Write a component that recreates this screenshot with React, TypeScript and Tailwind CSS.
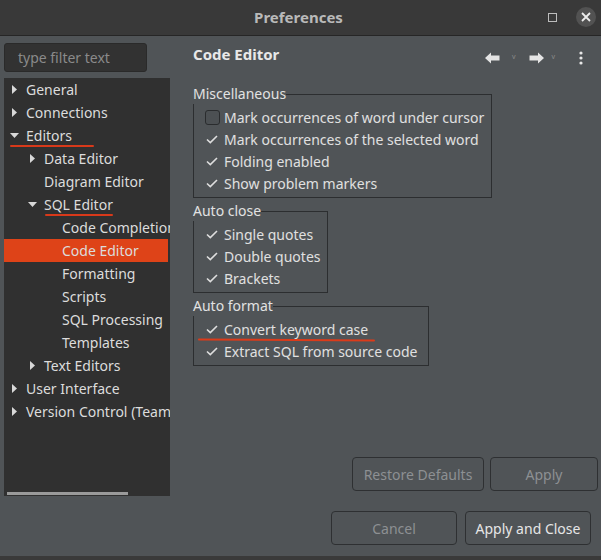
import React from "react";

type Item = { label: string; level: number; arrow?: "right" | "down"; selected?: boolean; ul?: { left: number; width: number } };

const items: Item[] = [
  { label: "General", level: 0, arrow: "right" },
  { label: "Connections", level: 0, arrow: "right" },
  { label: "Editors", level: 0, arrow: "down", ul: { left: 6, width: 84 } },
  { label: "Data Editor", level: 1, arrow: "right" },
  { label: "Diagram Editor", level: 1 },
  { label: "SQL Editor", level: 1, arrow: "down", ul: { left: 41, width: 68 } },
  { label: "Code Completion", level: 2 },
  { label: "Code Editor", level: 2, selected: true },
  { label: "Formatting", level: 2 },
  { label: "Scripts", level: 2 },
  { label: "SQL Processing", level: 2 },
  { label: "Templates", level: 2 },
  { label: "Text Editors", level: 1, arrow: "right" },
  { label: "User Interface", level: 0, arrow: "right" },
  { label: "Version Control (Team)", level: 0, arrow: "right" },
];

const padFor = ["pl-[4px]", "pl-[22px]", "pl-[40px]"];

function Arrow({ dir }: { dir?: "right" | "down" }) {
  if (dir === "right")
    return (
      <div className="w-[18px] shrink-0 pl-[4px] flex items-center">
        <svg width="5" height="9" viewBox="0 0 5 9"><path d="M0 0 L5 4.5 L0 9 Z" fill="#d8d8d8" /></svg>
      </div>
    );
  if (dir === "down")
    return (
      <div className="w-[18px] shrink-0 pl-[2px] flex items-center">
        <svg width="9" height="5" viewBox="0 0 9 5"><path d="M0 0 L9 0 L4.5 5 Z" fill="#d8d8d8" /></svg>
      </div>
    );
  return <div className="w-[18px] shrink-0" />;
}

function Check() {
  return (
    <div className="w-[20px] h-[16px] shrink-0 flex items-center justify-center">
      <svg width="12" height="9" viewBox="0 0 12 9">
        <path d="M1 4.5 L4.3 7.6 L11 1" fill="none" stroke="#dedede" strokeWidth="1.6" />
      </svg>
    </div>
  );
}

function Box() {
  return (
    <div className="w-[20px] h-[16px] shrink-0 flex items-center justify-center">
      <div className="w-[15px] h-[15px] rounded-[3px] border border-[#2a2c2e] bg-[#4c5053]" />
    </div>
  );
}

function Row({ label, checked = true, ul }: { label: string; checked?: boolean; ul?: boolean }) {
  return (
    <div className="relative h-[22px] flex items-center pl-[8px] pr-[4px] gap-[2px] whitespace-nowrap">
      {checked ? <Check /> : <Box />}
      <span>{label}</span>
      {ul && <div className="absolute left-[4px] bottom-[-1px] w-[177px] h-[2px] bg-[#dc3b1a] rounded-full rotate-[0.4deg]" />}
    </div>
  );
}

function Group({ title, children, w }: { title: string; children: React.ReactNode; w: string }) {
  return (
    <fieldset className={`border border-[#2c2e30] ${w} min-w-0 px-0 pb-[3px]`}>
      <legend className="px-0 ml-[-1px] leading-[20px] text-[#e2e2e2]">{title}</legend>
      <div className="pt-[2px]">{children}</div>
    </fieldset>
  );
}

function Btn({ label, enabled, w }: { label: string; enabled?: boolean; w: string }) {
  return (
    <div
      className={`${w} h-[34px] rounded-[4px] border border-[#2e3032] flex items-center justify-center ${
        enabled ? "text-[#e6e6e6]" : "text-[#8d9093]"
      }`}
    >
      {label}
    </div>
  );
}

export default function App() {
  return (
    <div
      className="w-[601px] h-[560px] bg-[#505457] flex flex-col overflow-hidden text-[14px] text-[#e0e0e0]"
      style={{ fontFamily: "'Noto Sans', 'Open Sans', sans-serif" }}
    >
      {/* title bar */}
      <div className="h-[36px] shrink-0 bg-[#393939] border-b border-[#262626] flex items-center relative">
        <div className="flex-1 text-center font-bold text-[#b9b9b9] text-[15px] pr-[4px]">Preferences</div>
        <div className="absolute right-[44px] top-[13px] w-[9px] h-[9px] border border-[#bdbdbd]" />
        <div className="absolute right-[5px] top-[7px] w-[20px] h-[20px] rounded-full bg-[#525252] flex items-center justify-center">
          <svg width="10" height="10" viewBox="0 0 10 10">
            <path d="M1 1 L9 9 M9 1 L1 9" stroke="#ececec" strokeWidth="1.8" />
          </svg>
        </div>
      </div>

      {/* main */}
      <div className="flex h-[460px] shrink-0">
        {/* left */}
        <div className="w-[166px] shrink-0 ml-[4px] flex flex-col pt-[7px]">
          <div className="w-[143px] h-[29px] rounded-[3px] bg-[#323232] border border-[#2a2a2a] flex items-center pl-[13px] text-[#8a8a8a]">
            type filter text
          </div>
          <div className="mt-[6px] h-[418px] bg-[#303030] relative overflow-hidden">
            {items.map((it) => (
              <div
                key={it.label}
                className={`relative h-[23px] flex items-center whitespace-nowrap ${padFor[it.level]} ${
                  it.selected ? "bg-[#de4318] mr-[2px]" : ""
                }`}
              >
                <Arrow dir={it.arrow} />
                <span className="text-[#dcdcdc] shrink-0">{it.label}</span>
                {it.ul && (
                  <div
                    className="absolute bottom-[0px] h-[2px] bg-[#d8391a] rounded-full"
                    style={{ left: it.ul.left, width: it.ul.width }}
                  />
                )}
              </div>
            ))}
            <div className="absolute left-[3px] bottom-[1px] w-[121px] h-[3px] bg-[#9a9a9a]" />
          </div>
        </div>

        {/* right */}
        <div className="flex-1 ml-[23px] flex flex-col pt-[8px] pb-[5px]">
          <div className="flex items-center h-[20px] pr-[18px]">
            <div className="font-bold text-[15px] text-[#e8e8e8] flex-1">Code Editor</div>
            <svg width="15" height="12" viewBox="0 0 15 12" className="mt-[8px]">
              <path d="M0 6 L6 0.5 L6 3.5 L14.5 3.5 L14.5 8.5 L6 8.5 L6 11.5 Z" fill="#e4e4e4" />
            </svg>
            <span className="text-[7px] text-[#8a8a8a] ml-[12px] mt-[6px]">v</span>
            <svg width="15" height="12" viewBox="0 0 15 12" className="mt-[8px] ml-[14px]">
              <path d="M15 6 L9 0.5 L9 3.5 L0.5 3.5 L0.5 8.5 L9 8.5 L9 11.5 Z" fill="#e4e4e4" />
            </svg>
            <span className="text-[7px] text-[#8a8a8a] ml-[7px] mt-[6px]">v</span>
            <svg width="4" height="14" viewBox="0 0 4 14" className="ml-[24px] mt-[8px]">
              <circle cx="2" cy="2" r="1.6" fill="#e8e8e8" />
              <circle cx="2" cy="7" r="1.6" fill="#e8e8e8" />
              <circle cx="2" cy="12" r="1.6" fill="#e8e8e8" />
            </svg>
          </div>

          <div className="mt-[20px] flex flex-col gap-[3px]">
            <Group title="Miscellaneous" w="w-[299px]">
              <Row label="Mark occurrences of word under cursor" checked={false} />
              <Row label="Mark occurrences of the selected word" />
              <Row label="Folding enabled" />
              <Row label="Show problem markers" />
            </Group>
            <Group title="Auto close" w="w-[135px]">
              <Row label="Single quotes" />
              <Row label="Double quotes" />
              <Row label="Brackets" />
            </Group>
            <Group title="Auto format" w="w-[236px]">
              <Row label="Convert keyword case" ul />
              <Row label="Extract SQL from source code" />
            </Group>
          </div>

          <div className="flex-1" />
          <div className="flex justify-end gap-[6px] pr-[3px]">
            <Btn label="Restore Defaults" w="w-[132px]" />
            <Btn label="Apply" w="w-[108px]" />
          </div>
        </div>
      </div>

      {/* footer */}
      <div className="flex justify-end gap-[8px] pr-[10px] pt-[15px]">
        <Btn label="Cancel" w="w-[126px]" />
        <Btn label="Apply and Close" enabled w="w-[126px]" />
      </div>
      <div className="flex-1" />
      <div className="h-[4px] bg-[#3a3a3a]" />
    </div>
  );
}
